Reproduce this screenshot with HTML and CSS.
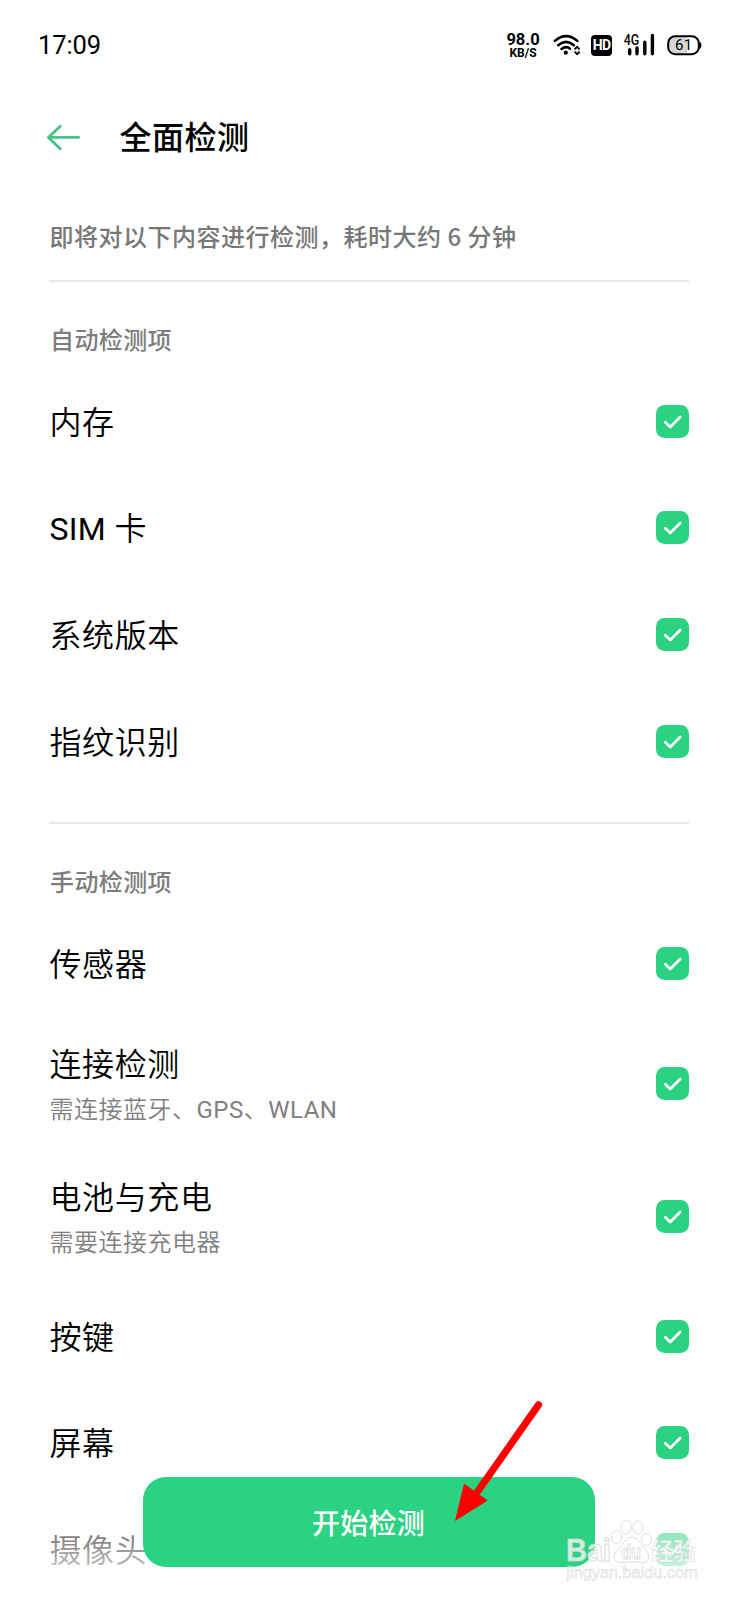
FILE: index.html
```html
<!DOCTYPE html>
<html lang="zh-CN">
<head>
<meta charset="utf-8">
<title>全面检测</title>
<link rel="stylesheet" href="styles.css">
</head>
<body>
<svg class="defs" width="0" height="0" aria-hidden="true">
  <symbol id="check" viewBox="0 0 33 33">
    <rect width="33" height="33" rx="8.5" fill="#2bd282"/>
    <path d="M9.3 17.3l4.9 4.7L24.2 12" fill="none" stroke="#fff" stroke-width="2.7" stroke-linecap="round" stroke-linejoin="round"/>
  </symbol>
</svg>
<div class="screen">
  <header class="status">
    <span class="clock">17:09</span>
    <div class="indicators">
      <div class="speed"><span class="speed-value">98.0</span><span class="speed-unit">KB/S</span></div>
      <svg class="wifi" width="27" height="22" viewBox="0 0 27 22">
        <g fill="none" stroke="#000" stroke-width="2.5" stroke-linecap="round">
          <path d="M1.8 6.9Q13 -2.7 24.4 6.9"/>
          <path d="M5.2 11.2Q13 4.5 20.9 11.2"/>
          <path d="M8.5 15Q13 11.4 17 14.7"/>
        </g>
        <circle cx="12.8" cy="18.7" r="2.1"/>
        <path d="M21.6 15.4l2.5-2.5 2.5 2.5M21.6 17.7l2.5 2.5 2.5-2.5" fill="none" stroke="#000" stroke-width="1.9"/>
      </svg>
      <div class="hd">HD</div>
      <svg class="signal" width="31" height="22" viewBox="0 0 31 22">
        <text x="-0.3" y="11" class="net" textLength="15.5" lengthAdjust="spacingAndGlyphs">4G</text>
        <path d="M5.7 15.7v4M13 14v5.7M20.8 8.2v11.5M28.4 1.5v18.2" stroke="#000" stroke-width="3.4" stroke-linecap="round"/>
      </svg>
      <svg class="battery" width="35" height="21" viewBox="0 0 35 21">
        <rect x="1.2" y="1.2" width="30.6" height="18" rx="7" fill="#fff"/>
        <path d="M8.2 2.2h11.8v16H8.2a6 6 0 0 1-6-6v-4a6 6 0 0 1 6-6z" fill="#d5d5d5"/>
        <rect x="1.2" y="1.2" width="30.6" height="18" rx="7" fill="none" stroke="#000" stroke-width="2"/>
        <path d="M32.4 6.5q2 .5 2 3.7t-2 3.7z"/>
        <text x="8" y="15.2" class="level">61</text>
      </svg>
    </div>
  </header>

  <nav class="titlebar">
    <svg width="34" height="26" viewBox="0 0 34 26">
      <path d="M14.2 1.2L2.4 12.4l11.8 11.4M2.6 12.4h30" fill="none" stroke="#43c585" stroke-width="2.8" stroke-linecap="round" stroke-linejoin="round"/>
    </svg>
    <h1>全面检测</h1>
  </nav>

  <main class="content">
    <p class="intro">即将对以下内容进行检测，耗时大约 6 分钟</p>
    <section class="group">
      <h2>自动检测项</h2>
      <div class="row"><span class="name">内存</span><svg class="box"><use href="#check"/></svg></div>
      <div class="row"><span class="name"><span class="latin">SIM</span> 卡</span><svg class="box"><use href="#check"/></svg></div>
      <div class="row"><span class="name">系统版本</span><svg class="box"><use href="#check"/></svg></div>
      <div class="row"><span class="name">指纹识别</span><svg class="box"><use href="#check"/></svg></div>
    </section>
    <section class="group">
      <h2>手动检测项</h2>
      <div class="row"><span class="name">传感器</span><svg class="box"><use href="#check"/></svg></div>
      <div class="row tall"><div class="labels"><span class="name">连接检测</span><span class="note">需连接蓝牙、<span class="latin">GPS</span>、<span class="latin">WLAN</span></span></div><svg class="box"><use href="#check"/></svg></div>
      <div class="row tall"><div class="labels"><span class="name">电池与充电</span><span class="note">需要连接充电器</span></div><svg class="box"><use href="#check"/></svg></div>
      <div class="row"><span class="name">按键</span><svg class="box"><use href="#check"/></svg></div>
      <div class="row"><span class="name">屏幕</span><svg class="box"><use href="#check"/></svg></div>
      <div class="row"><span class="name">摄像头</span><svg class="box"><use href="#check"/></svg></div>
    </section>
  </main>

  <footer class="action">
    <button class="start" type="button">开始检测</button>
  </footer>

  <svg class="pointer" width="94" height="126" viewBox="0 0 94 126">
    <path d="M85.5 7.9L25 94" stroke="#fe0000" stroke-width="7.2" stroke-linecap="round"/>
    <path d="M2 124L11 86.5 34.700 103.500z" fill="#fe0000"/>
  </svg>

  <svg class="watermark" width="140" height="72" viewBox="0 0 140 72">
    <g fill="#fff" fill-opacity=".75" stroke="#d4d4d4" stroke-opacity=".8" stroke-width="1">
      <ellipse cx="66" cy="17" rx="5" ry="7"/>
      <ellipse cx="78" cy="17.5" rx="5" ry="6.5"/>
      <ellipse cx="56.5" cy="27" rx="5" ry="6.5"/>
      <ellipse cx="86.5" cy="29.5" rx="5" ry="6"/>
      <path d="M71.5 27.5C65 27.5 64 34 58 39.5 51 46 54 53.5 62 52.5 68 51.5 75 51.5 81 52.5 89 53.5 91.5 46 85.5 40 80 34.5 78.5 27.5 71.5 27.5z"/>
      <text x="6" y="51" class="mark-latin" textLength="45" lengthAdjust="spacingAndGlyphs">Bai</text>
      <text x="61" y="49" class="mark-du" textLength="20" lengthAdjust="spacingAndGlyphs">du</text>
      <text x="91" y="50" class="mark-cjk" textLength="45" lengthAdjust="spacingAndGlyphs">经验</text>
      <text x="6.5" y="68" class="mark-url" textLength="131" lengthAdjust="spacingAndGlyphs">jingyan.baidu.com</text>
    </g>
  </svg>
</div>
</body>
</html>
```
FILE: styles.css
```css
* { box-sizing: border-box; }

body {
  margin: 0;
  background: #fefefe;
  color: #000;
  font-family: Roboto, "Noto Sans CJK SC", sans-serif;
}

.defs { position: absolute; }

.screen {
  position: relative;
  width: 738px;
  height: 1600px;
  overflow: hidden;
}

.status {
  display: flex;
  justify-content: space-between;
  align-items: center;
  height: 90px;
  padding: 0 36px 0 38px;
}

.clock { font-size: 25.5px; letter-spacing: -0.1px; }

.indicators { display: flex; align-items: center; }

.speed {
  display: flex;
  flex-direction: column;
  align-items: center;
  width: 34px;
  margin-right: 13px;
  padding-top: 2px;
  font-weight: 700;
}
.speed-value { font-size: 16.5px; line-height: 14px; }
.speed-unit { font-size: 12px; line-height: 12px; }

.wifi { margin-right: 11px; }

.hd {
  width: 21px;
  height: 21px;
  margin-right: 12px;
  border-radius: 4px;
  background: #000;
  color: #fff;
  font-size: 14px;
  font-weight: 700;
  letter-spacing: -0.8px;
  line-height: 21px;
  text-align: center;
}

.signal { margin-right: 12px; overflow: visible; }
.net { font-size: 14.5px; font-weight: 500; }
.level { font-size: 15px; letter-spacing: 0.4px; }

.titlebar {
  display: flex;
  align-items: center;
  gap: 39.5px;
  height: 95px;
  padding-left: 46px;
}

h1 {
  margin: 0;
  padding-top: 1px;
  font-size: 32px;
  font-weight: 500;
  letter-spacing: 0.5px;
  line-height: 48px;
}

.content { padding: 0 49px; }

.intro {
  display: flex;
  align-items: center;
  height: 95px;
  margin: 0;
  padding: 6px 0 0 0.5px;
  color: #777;
  font-family: "Noto Sans CJK SC", sans-serif;
  font-size: 24px;
  font-weight: 500;
  letter-spacing: 0.5px;
  white-space: pre;
}

.group {
  height: 542.3px;
  border-top: 2px solid #e8e8e8;
}

h2 {
  display: flex;
  align-items: center;
  height: 86px;
  margin: 0;
  padding: 31px 0 0 1px;
  color: #7d7d7d;
  font-size: 24px;
  font-weight: 500;
  letter-spacing: 0.4px;
  line-height: 36px;
}

.row {
  display: flex;
  align-items: center;
  justify-content: space-between;
  height: 106.6px;
}
.row.tall { height: 133px; }

.name {
  padding: 3px 0 0 0.5px;
  font-size: 32px;
  font-weight: 350;
  letter-spacing: 0.6px;
  line-height: 48px;
}

.latin { font-weight: 400; }
.name .latin { letter-spacing: 0.3px; }

.labels { display: flex; flex-direction: column; }
.labels .name { padding-top: 2px; }

.note {
  margin-top: 3px;
  padding-left: 0.5px;
  color: #808080;
  font-size: 24px;
  font-weight: 350;
  letter-spacing: 0.5px;
  line-height: 36px;
}

.box { width: 33px; height: 33px; flex: none; }

.action {
  position: absolute;
  left: 0;
  bottom: 0;
  width: 100%;
  height: 125px;
  padding-top: 2px;
  background: linear-gradient(rgba(254, 254, 254, 0), rgba(254, 254, 254, 0.5) 50%, #fefefe);
  text-align: center;
}

.start {
  width: 451.5px;
  height: 90px;
  padding: 0 1px 0 0;
  border: 0;
  border-radius: 23px;
  background: #2bd282;
  color: #fff;
  font-family: inherit;
  font-size: 28px;
  font-weight: 500;
  letter-spacing: 0.3px;
}

.pointer { position: absolute; left: 453px; top: 1397px; }

.watermark { position: absolute; left: 560px; top: 1510px; }
.mark-latin { font: 700 31px "Liberation Sans", sans-serif; }
.mark-du { font: 700 20px "Liberation Sans", sans-serif; }
.mark-cjk { font: 700 24px "Noto Sans CJK SC", sans-serif; stroke-width: 0.6px; }
.mark-url { font: 400 16px "Liberation Sans", sans-serif; stroke-width: 0.6px; }
```
